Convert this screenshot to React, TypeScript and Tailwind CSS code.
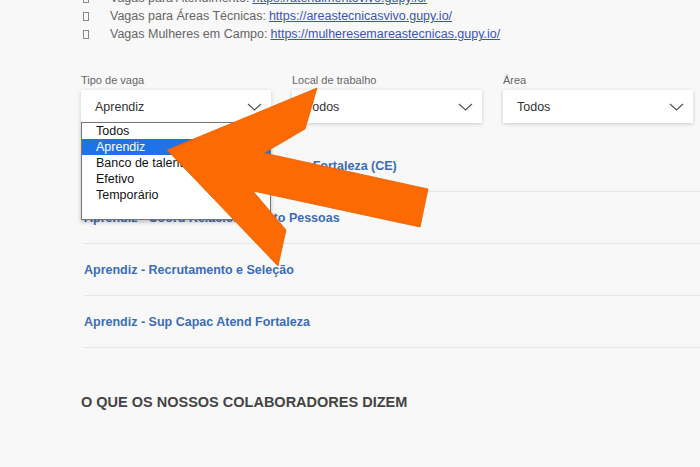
import React from "react";

const links = [
  { label: "Vagas para Atendimento:", url: "https://atendimentovivo.gupy.io/" },
  { label: "Vagas para Áreas Técnicas:", url: "https://areastecnicasvivo.gupy.io/" },
  { label: "Vagas Mulheres em Campo:", url: "https://mulheresemareastecnicas.gupy.io/" },
];

const filters = [
  { label: "Tipo de vaga", value: "Aprendiz" },
  { label: "Local de trabalho", value: "Todos" },
  { label: "Área", value: "Todos" },
];

const options = ["Todos", "Aprendiz", "Banco de talentos", "Efetivo", "Temporário"];

const jobs = [
  "Aprendiz - Atendimento ao Cliente em Fortaleza (CE)",
  "Aprendiz - Coord Relacionamento Pessoas",
  "Aprendiz - Recrutamento e Seleção",
  "Aprendiz - Sup Capac Atend Fortaleza",
];

function Chevron() {
  return (
    <svg width="15" height="8" viewBox="0 0 15 8" className="shrink-0">
      <polyline points="1,1 7.5,7 14,1" fill="none" stroke="#555" strokeWidth="1.2" />
    </svg>
  );
}

export default function App() {
  return (
    <div className="relative h-[467px] w-[700px] overflow-hidden bg-[#f8f8f8] font-['Liberation_Sans',Arial,sans-serif]">
      {/* link list */}
      <ul className="mt-[-11px] pl-[83px] text-[12.5px] leading-[18px] text-[#666]">
        {links.map((l) => (
          <li key={l.url} className="flex items-center">
            <span className="mr-[21px] inline-block h-[9px] w-[6px] border border-[#888]" />
            <span>{l.label}</span>
            <a className="ml-[3px] text-[#3b55b5] underline">{l.url}</a>
          </li>
        ))}
      </ul>

      {/* filters */}
      <div className="relative mt-[30px] flex gap-[21px] pl-[81px]">
        {filters.map((f, i) => (
          <div key={f.label} className="relative w-[190px]">
            <div className="text-[11px] leading-[14px] text-[#666]">{f.label}</div>
            <div className="mt-[3px] flex h-[33px] items-center justify-between bg-white pl-[14px] pr-[9px] text-[12.5px] text-[#333] shadow-[0_1px_4px_rgba(0,0,0,0.18)]">
              <span className="pt-[1px]">{f.value}</span>
              <Chevron />
            </div>
            {i === 0 && (
              <div className="absolute left-0 top-[49px] z-10 h-[98px] w-[190px] border border-[#767676] bg-white shadow-[0_2px_4px_rgba(0,0,0,0.25)]">
                {options.map((o) => (
                  <div
                    key={o}
                    className={
                      o === "Aprendiz"
                        ? "h-[16px] bg-[#1e74e6] pl-[14px] text-[12.5px] leading-[16px] text-white"
                        : "h-[16px] pl-[14px] text-[12.5px] leading-[16px] text-[#111]"
                    }
                  >
                    {o}
                  </div>
                ))}
              </div>
            )}
          </div>
        ))}
      </div>

      {/* job list */}
      <div className="mt-[17px] pl-[84px]">
        {jobs.map((j) => (
          <div key={j} className="flex h-[52px] items-center border-b border-[#e6e6e6] pt-[2px]">
            <a className="text-[12.5px] font-bold text-[#3a6db5]">{j}</a>
          </div>
        ))}
      </div>

      <h2 className="mt-[45px] pl-[81px] text-[14.5px] font-bold leading-[18px] text-[#444]">
        O QUE OS NOSSOS COLABORADORES DIZEM
      </h2>

      {/* orange arrow overlay */}
      <svg className="pointer-events-none absolute left-0 top-0 z-20" width="700" height="467">
        <polygon
          points="167,150 317,88 305,129 264,153 428,189 420,227 253,191 286,230 278,266"
          fill="#fd6a02"
          stroke="#e85f00"
          strokeWidth="0.8"
          strokeLinejoin="miter"
        />
      </svg>
    </div>
  );
}
